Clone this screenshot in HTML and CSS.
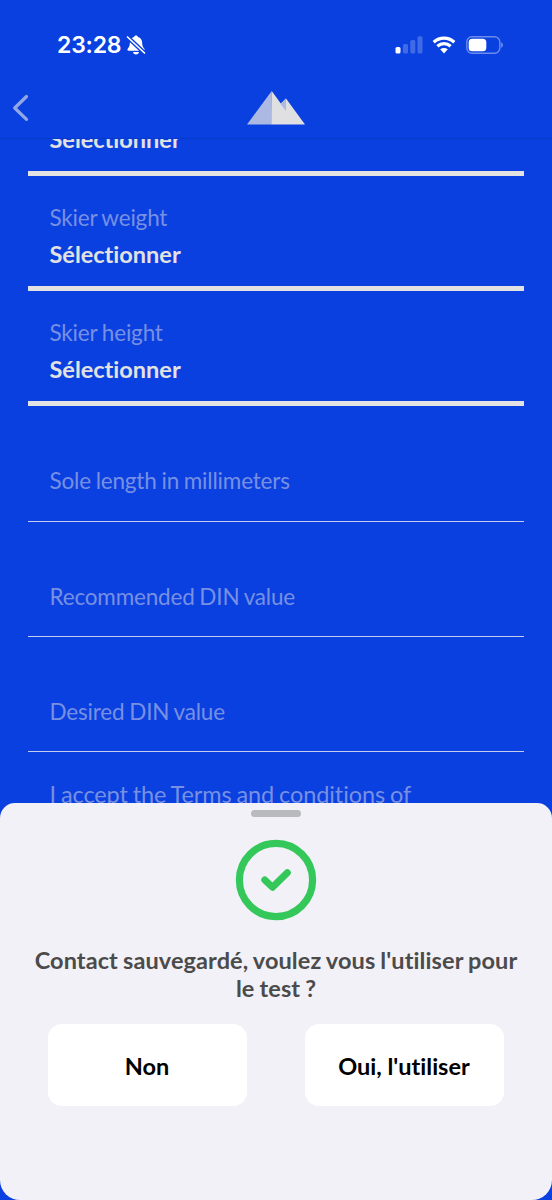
FILE: index.html
```html
<!DOCTYPE html>
<html lang="fr">
<head>
<meta charset="utf-8">
<title>Contact</title>
<link rel="stylesheet" href="styles.css">
</head>
<body>
<div class="screen">
  <header class="header">
    <div class="status">
      <div class="status-left">
        <span class="clock">23:28</span>
        <svg class="bell" width="20" height="20" viewBox="0 0 20 20">
          <path fill="#fff" d="M10 .6c1 0 1.800.6 2 1.500 2.600.8 4 2.800 4.100 5.500.1 3.200.6 4.400 2 5.800.9.9.6 2.300-.8 2.300H2.700c-1.400 0-1.700-1.400-.8-2.300 1.400-1.400 1.900-2.600 2-5.800C4 4.900 5.400 2.900 8 2.100 8.200 1.200 9 .6 10 .6zM7 17h6c-.2 1.400-1.400 2.400-3 2.400S7.200 18.400 7 17z"/>
          <path stroke="#0a40df" stroke-width="4.200" d="M1 1.500 19 18.500"/>
          <path stroke="#fff" stroke-width="1.700" stroke-linecap="round" d="M1.500 2 18.500 18"/>
        </svg>
      </div>
      <div class="status-right">
        <svg width="28" height="18" viewBox="0 0 28 18" fill="#fff">
          <rect x=".5" y="11" width="5" height="6.500" rx="1.500"/>
          <g opacity=".22">
            <rect x="8" y="8" width="5" height="9.500" rx="1.500"/>
            <rect x="15.300" y="4" width="5" height="13.500" rx="1.500"/>
            <rect x="22.500" y=".3" width="5" height="17.200" rx="1.500"/>
          </g>
        </svg>
        <svg class="wifi" width="24" height="18" viewBox="0 0 24 18">
          <g fill="none" stroke="#fff" stroke-width="3.300">
            <path d="M1.700 6.200C7.700.8 16.300.8 22.300 6.200"/>
            <path d="M5.400 10.200c3.900-3.400 9.300-3.400 13.200 0"/>
          </g>
          <path fill="#fff" d="M8.200 13.300c2.300-1.900 5.300-1.900 7.600 0L12 17.400z"/>
        </svg>
        <svg class="battery" width="38" height="18" viewBox="0 0 38 18">
          <rect x=".8" y=".8" width="33" height="16.400" rx="5.200" fill="none" stroke="#fff" stroke-opacity=".4" stroke-width="1.400"/>
          <rect x="2.700" y="2.700" width="17.600" height="12.600" rx="3.500" fill="#fff"/>
          <path fill="#fff" fill-opacity=".45" d="M35.200 6.200c2.200 1 2.200 4.600 0 5.600z"/>
        </svg>
      </div>
    </div>
    <div class="nav">
      <svg class="back" width="18" height="28" viewBox="0 0 18 28">
        <path fill="none" stroke="#92a8e6" stroke-width="3.200" stroke-linecap="round" stroke-linejoin="round" d="M14.500 2.500 2.700 14l11.800 11.300"/>
      </svg>
      <svg class="logo" width="60" height="34" viewBox="0 0 60 34">
        <path fill="#acb9e3" d="M25.700 0 1 33.500h25z"/>
        <path fill="#e0e0e2" d="M25.700 0v33.500H59L40 7.500l-5.200 5z"/>
        <path fill="#acb9e3" d="M40 7.500V20l-5.500-7z"/>
      </svg>
    </div>
  </header>
  <main class="form">
    <div class="field select"><strong class="value">Sélectionner</strong></div>
    <div class="field select"><span class="label">Skier weight</span><strong class="value">Sélectionner</strong></div>
    <div class="field select"><span class="label">Skier height</span><strong class="value">Sélectionner</strong></div>
    <div class="field input"><span class="label">Sole length in millimeters</span></div>
    <div class="field input"><span class="label">Recommended DIN value</span></div>
    <div class="field input"><span class="label">Desired DIN value</span></div>
    <p class="terms">I accept the Terms and conditions of</p>
  </main>
  <section class="sheet">
    <div class="grabber"></div>
    <svg class="check" width="82" height="82" viewBox="0 0 82 82" fill="none" stroke="#34c759">
      <circle cx="41" cy="41" r="36.600" stroke-width="7.200"/>
      <path stroke-width="7" stroke-linecap="round" stroke-linejoin="round" d="M29.800 41 37.500 48.300 52.300 33.700"/>
    </svg>
    <p class="message">Contact sauvegardé, voulez vous l'utiliser pour le test ?</p>
    <div class="actions">
      <button class="button">Non</button>
      <button class="button">Oui, l'utiliser</button>
    </div>
  </section>
</div>
</body>
</html>
```
FILE: styles.css
```css
* { box-sizing: border-box; }
body { margin: 0; background: #0a40df; font-family: Lato, "Open Sans", sans-serif; font-variant-ligatures: none; }
svg { display: block; flex: none; }
.screen { width: 552px; height: 1200px; display: flex; flex-direction: column; overflow: hidden; }
.header { flex: none; height: 139px; border-bottom: 1px solid #0939c8; }
.status { height: 90px; padding: 0 49px 0 57px; display: flex; justify-content: space-between; align-items: center; }
.status-left, .status-right { display: flex; align-items: center; }
.clock { font: 600 23px/28px Inter, sans-serif; letter-spacing: -0.2px; color: #fff; width: 64px; white-space: nowrap; }
.bell { margin-left: 5px; }
.wifi { margin-left: 9px; }
.battery { margin-left: 10px; margin-right: -1px; }
.nav { height: 48px; display: grid; grid-template-columns: 1fr 60px 1fr; padding: 1px 12px 0; }
.back { margin-top: 3px; }
.form { flex: none; height: 664px; overflow: hidden; padding: 0 28px; display: flex; flex-direction: column; }
.field { flex: none; height: 115.33px; padding-left: 21.5px; display: flex; flex-direction: column; color: #e2e2e2; }
.field:first-child { margin-top: -78.63px; padding-top: 55.4px; }
.select { border-bottom: 5px solid #e2e2e2; padding-top: 28px; }
.input { border-bottom: 1.5px solid #c5cdec; padding-top: 61px; }
.label { font-size: 22.5px; line-height: 28px; letter-spacing: -0.18px; word-spacing: -0.8px; color: #7890e3; }
.value { font-size: 23.5px; line-height: 28px; font-weight: 700; margin-top: 8.4px; }
.field:first-child .value { margin-top: 9.4px; }
.terms { margin: 28px 0 0 21.5px; font-size: 23.5px; line-height: 28px; letter-spacing: -0.1px; word-spacing: -1px; color: #7890e3; white-space: nowrap; }
.sheet { flex: none; height: 397px; background: #f2f1f7; border-radius: 15px 15px 20px 20px; padding-top: 7px; display: flex; flex-direction: column; align-items: center; }
.grabber { width: 50px; height: 7px; border-radius: 4px; background: #b8babe; }
.check { margin-top: 22px; }
.message { margin: 25px 0 0; padding: 0 30px; font-size: 23.5px; line-height: 28px; font-weight: 700; letter-spacing: 0.1px; word-spacing: -0.8px; color: #4b4b4b; text-align: center; }
.actions { margin-top: 22px; display: flex; gap: 58px; }
.button { width: 199px; height: 82px; border: 0; border-radius: 14px; background: #fff; color: #000; font: 700 23.5px/28px Lato, sans-serif; font-variant-ligatures: none; padding: 1px 1px 0 0; }
```
